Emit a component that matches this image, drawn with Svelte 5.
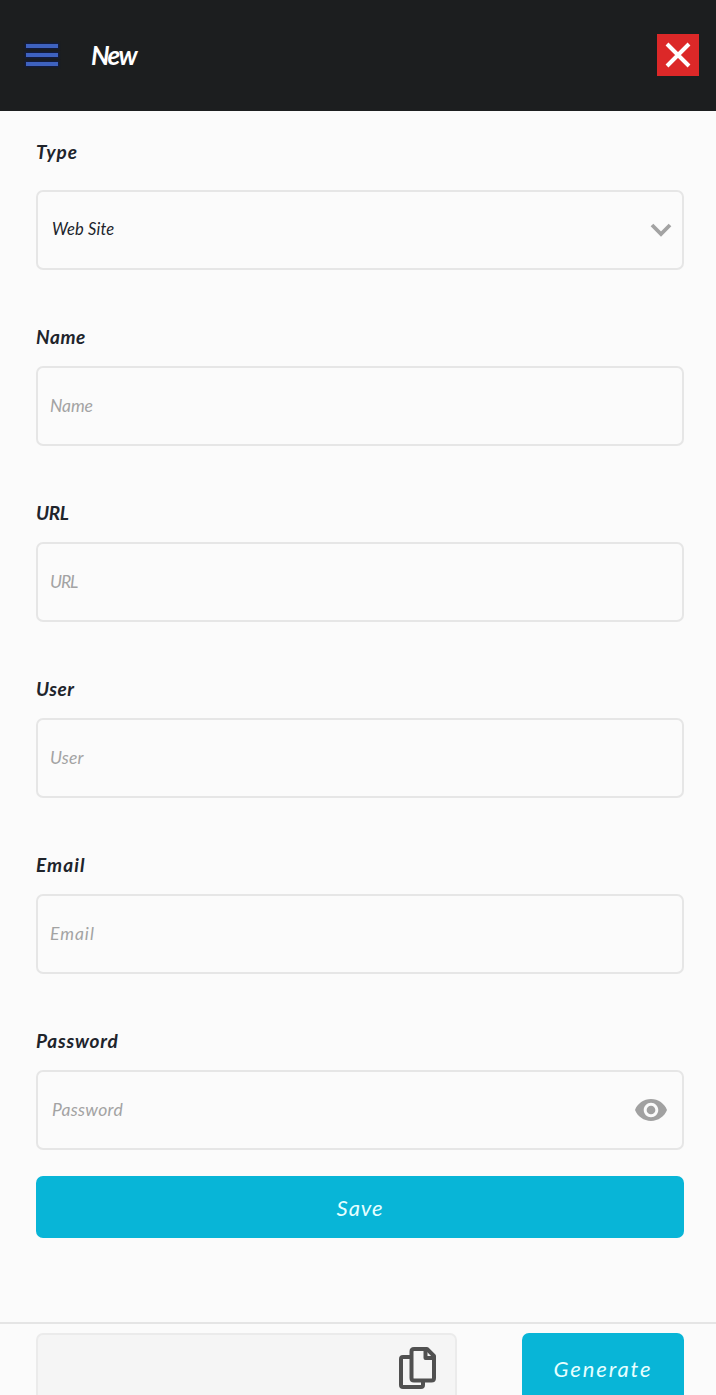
<script>
  const fields = [
    { label: 'Name', labelTrack: 0.6, track: -0.1 },
    { label: 'URL', labelTrack: -0.4, track: -1.1 },
    { label: 'User', labelTrack: 0.5, track: 0.2 },
    { label: 'Email', labelTrack: 1.1, track: 1 },
    { label: 'Password', labelTrack: 0.8, track: 0.3 }
  ];
</script>

<div class="screen">
  <header>
    <button class="menu" aria-label="Menu"><i></i><i></i><i></i></button>
    <h1>New</h1>
    <button class="close" aria-label="Close">
      <svg viewBox="0 0 42 42"><path d="M10 10L32 32M32 10L10 32" /></svg>
    </button>
  </header>

  <main>
    <section class="type">
      <div class="label">Type</div>
      <div class="box select">
        <span>Web Site</span>
        <svg class="chevron" viewBox="0 0 22 14"><path d="M2 2L11 11L20 2" /></svg>
      </div>
    </section>

    {#each fields as f}
      <section>
        <div class="label" style="letter-spacing: {f.labelTrack}px">{f.label}</div>
        <div class="box" class:password={f.label === 'Password'}>
          <input placeholder={f.label} aria-label={f.label} style="letter-spacing: {f.track}px" />
          {#if f.label === 'Password'}
            <svg class="eye" viewBox="1 4.5 22 15"><path d="M12 4.5C7 4.5 2.73 7.61 1 12c1.73 4.39 6 7.5 11 7.5s9.27-3.11 11-7.5c-1.73-4.39-6-7.5-11-7.5zM12 17c-2.76 0-5-2.24-5-5s2.24-5 5-5 5 2.24 5 5-2.24 5-5 5zm0-8c-1.66 0-3 1.34-3 3s1.34 3 3 3 3-1.34 3-3-1.34-3-3-3z" /></svg>
          {/if}
        </div>
      </section>
    {/each}

    <button class="action save">Save</button>
  </main>

  <footer>
    <div class="output">
      <svg class="copy" viewBox="0 0 38 42">
        <path d="M12 10H4Q2 10 2 12V38Q2 40 4 40H22Q24 40 24 38V34" />
        <path d="M15 2H28L35 9V31Q35 33.500 32.500 33.500H15Q12.500 33.500 12.500 31V4.500Q12.500 2 15 2Z" />
        <path d="M26.500 2V11H35" />
      </svg>
    </div>
    <button class="action generate">Generate</button>
  </footer>
</div>

<style>
  :global(body) { background: #fbfbfb; overflow: hidden; }
  .screen {
    height: 1395px;
    overflow: hidden;
    display: flex;
    flex-direction: column;
    background: #fbfbfb;
    color: #20242b;
    font-family: Lato, "Open Sans", sans-serif;
    font-style: italic;
  }
  button, input { font: inherit; border: 0; padding: 0; margin: 0; }
  svg { display: block; fill: none; flex: none; }
  header {
    height: 111px;
    flex: none;
    box-sizing: border-box;
    padding: 0 17px 1px 26px;
    display: flex;
    align-items: center;
    background: #1c1e1f;
  }
  .menu {
    width: 32px;
    display: flex;
    flex-direction: column;
    gap: 5px;
    background: none;
  }
  .menu i { height: 4px; background: #3e62c0; box-shadow: 0 0 2px 1px #101c48; }
  h1 {
    flex: 1;
    margin: 0 0 0 33px;
    color: #fff;
    font-size: 26px;
    line-height: 32px;
    font-weight: 700;
    letter-spacing: -1.700px;
  }
  .close { width: 42px; height: 42px; background: #dc2828; }
  .close path { stroke: #fff; stroke-width: 4; }
  main { padding: 0 32px 0 36px; height: 1211px; flex: none; }
  section { padding-top: 54px; }
  .label {
    height: 26px;
    margin-bottom: 16px;
    font-size: 19px;
    font-weight: 700;
    line-height: 26px;
  }
  .type { padding-top: 28px; }
  .type .label { margin-bottom: 25px; letter-spacing: 1px; }
  .box {
    height: 80px;
    box-sizing: border-box;
    border: 2px solid #e6e6e6;
    border-radius: 7px;
    display: flex;
    align-items: center;
    padding: 0 10px 0 12px;
    font-size: 17.500px;
  }
  .select { padding-left: 14px; font-size: 16.500px; }
  .select span { flex: 1; padding-bottom: 2px; letter-spacing: 0.150px; }
  .chevron { width: 22px; height: 14px; }
  .chevron path { stroke: #a3a3a3; stroke-width: 3.800; }
  .password { padding: 0 15px 0 14px; }
  input {
    flex: 1;
    min-width: 0;
    height: 40px;
    box-sizing: border-box;
    padding-bottom: 2px;
    background: none;
    outline: 0;
    color: #20242b;
  }
  input::placeholder { color: #a3a3a3; opacity: 1; }
  .eye { width: 32px; height: 22px; fill: #a1a1a1; }
  .action {
    background: #08b5d7;
    color: #e6ffff;
    border-radius: 7px;
    font-size: 22px;
  }
  .save { width: 648px; height: 62px; margin-top: 26px; letter-spacing: 0.900px; }
  footer {
    flex: none;
    height: 100px;
    box-sizing: border-box;
    border-top: 2px solid #e5e5e5;
    padding: 9px 32px 0 36px;
    display: flex;
    justify-content: space-between;
  }
  .output {
    width: 421px;
    height: 89px;
    box-sizing: border-box;
    border: 2px solid #ebebeb;
    border-radius: 7px;
    background: #f5f5f5;
    display: flex;
    justify-content: flex-end;
    padding: 12px 18px 0 0;
  }
  .copy { width: 38px; height: 42px; }
  .copy path { stroke: #505050; stroke-width: 4; stroke-linejoin: round; }
  .generate { width: 162px; height: 70px; letter-spacing: 1.900px; }
</style>
